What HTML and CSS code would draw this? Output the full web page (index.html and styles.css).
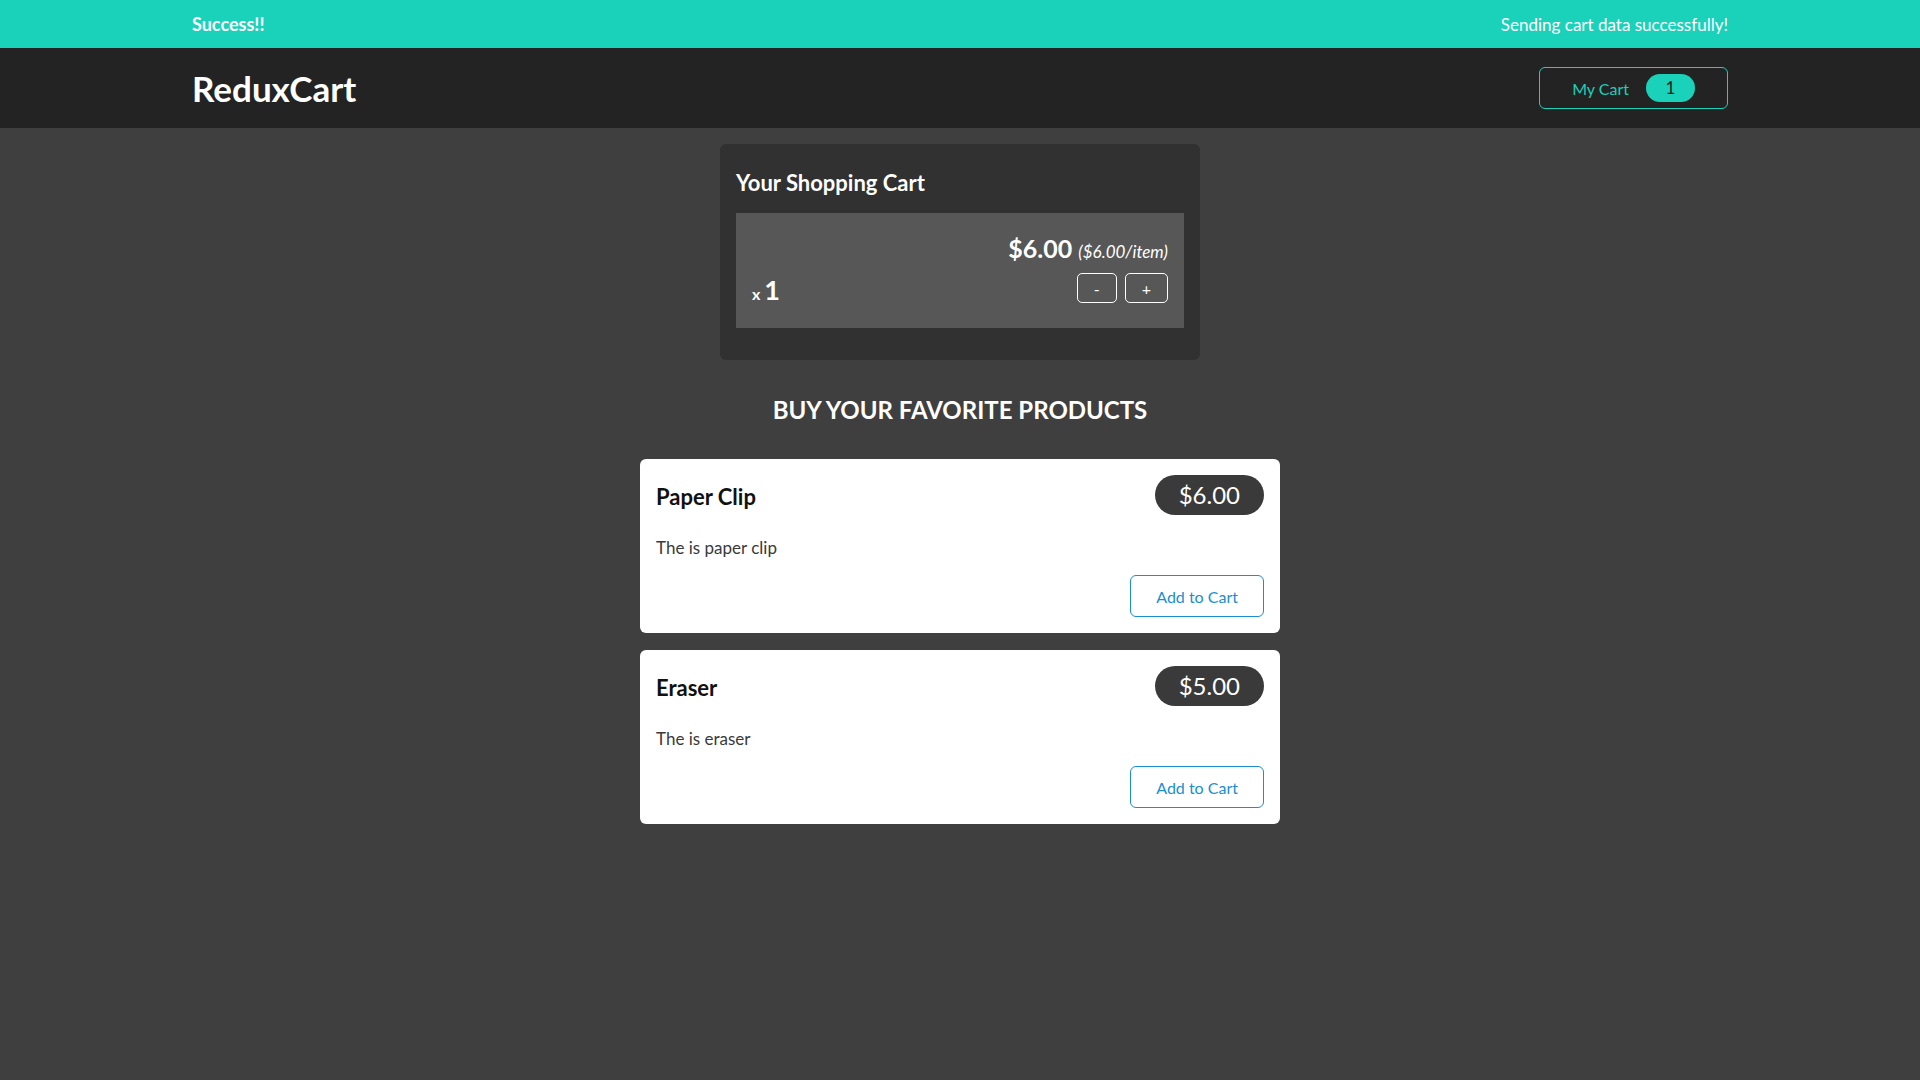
FILE: index.html
```html
<!DOCTYPE html>
<html lang="en">
<head>
<meta charset="utf-8">
<title>ReduxCart</title>
<link rel="stylesheet" href="styles.css">
</head>
<body>
<section class="notification">
  <h2>Success!!</h2>
  <p>Sending cart data successfully!</p>
</section>
<header class="header">
  <h1>ReduxCart</h1>
  <nav>
    <button class="cart-button">
      <span>My Cart</span>
      <span class="badge">1</span>
    </button>
  </nav>
</header>
<main>
  <section class="cart">
    <h2>Your Shopping Cart</h2>
    <ul class="cart-list">
      <li class="cart-item">
        <div class="cart-item-top">
          <div class="cart-price">$6.00 <span class="item-price">($6.00/item)</span></div>
        </div>
        <div class="cart-details">
          <div class="quantity">x <span>1</span></div>
          <div class="cart-actions">
            <button>-</button>
            <button>+</button>
          </div>
        </div>
      </li>
    </ul>
  </section>
  <section class="products">
    <h2>Buy your favorite products</h2>
    <ul class="product-list">
      <li class="product">
        <header class="product-head">
          <h3>Paper Clip</h3>
          <div class="price">$6.00</div>
        </header>
        <p>The is paper clip</p>
        <div class="product-actions">
          <button>Add to Cart</button>
        </div>
      </li>
      <li class="product">
        <header class="product-head">
          <h3>Eraser</h3>
          <div class="price">$5.00</div>
        </header>
        <p>The is eraser</p>
        <div class="product-actions">
          <button>Add to Cart</button>
        </div>
      </li>
    </ul>
  </section>
</main>
</body>
</html>
```

FILE: styles.css
```css
* {
  box-sizing: border-box;
}

html {
  font-family: Lato, "Noto Sans", sans-serif;
}

body {
  margin: 0;
  background-color: #3f3f3f;
}

.notification {
  height: 48px;
  padding: 0 10%;
  display: flex;
  justify-content: space-between;
  align-items: center;
  background-color: #1ad1b9;
  color: #ffffff;
}

.notification h2 {
  margin: 0;
  font-size: 18px;
  font-weight: 700;
}

.notification p {
  margin: 0;
  font-size: 17px;
}

.header {
  height: 80px;
  padding: 0 10%;
  display: flex;
  justify-content: space-between;
  align-items: center;
  background-color: #242323;
}

.header h1 {
  margin: 0;
  color: #ffffff;
  font-size: 35px;
  font-weight: 700;
}

.cart-button {
  display: flex;
  align-items: center;
  height: 42px;
  padding: 0 32px;
  background: transparent;
  border: 1px solid #1ad1b9;
  border-radius: 6px;
  color: #1ad1b9;
  font: inherit;
  font-size: 16px;
  cursor: pointer;
}

.badge {
  margin-left: 17px;
  width: 49px;
  height: 28px;
  line-height: 28px;
  border-radius: 30px;
  background-color: #1ad1b9;
  color: #1d1d1d;
  text-align: center;
  font-size: 17px;
}

.cart {
  width: 480px;
  margin: 16px auto 0;
  padding: 16px 16px 32px;
  background-color: #313131;
  border-radius: 6px;
  color: #ffffff;
}

.cart h2 {
  margin: 8px 0 0;
  font-size: 22px;
  line-height: 29px;
  font-weight: 700;
}

.cart-list {
  list-style: none;
  margin: 0;
  padding: 0;
}

.cart-item {
  margin-top: 16px;
  padding: 16px;
  background-color: #575757;
}

.cart-item-top {
  display: flex;
  justify-content: flex-end;
  padding-top: 3px;
  height: 35px;
  line-height: 32px;
}

.cart-price {
  font-size: 25px;
  font-weight: 700;
}

.item-price {
  font-size: 17px;
  line-height: 1;
  font-weight: 400;
  font-style: italic;
}

.cart-details {
  display: flex;
  justify-content: space-between;
  align-items: center;
  margin: 9px 0;
  height: 30px;
}

.quantity {
  padding-top: 8px;
  font-size: 16px;
  font-weight: 700;
  line-height: 30px;
}

.quantity span {
  font-size: 27px;
  line-height: 1;
}

.cart-actions {
  display: flex;
  gap: 8px;
}

.cart-actions button {
  height: 30px;
  padding: 0 16px;
  background: transparent;
  border: 1px solid #ffffff;
  border-radius: 5px;
  color: #ffffff;
  font: inherit;
  font-size: 16px;
  cursor: pointer;
}

.products h2 {
  margin: 35px 0 34px;
  color: #ffffff;
  text-align: center;
  text-transform: uppercase;
  font-size: 24px;
  line-height: 30px;
  font-weight: 700;
}

.product-list {
  list-style: none;
  width: 640px;
  margin: 0 auto;
  padding: 0;
}

.product {
  margin-bottom: 17px;
  padding: 16px;
  background-color: #ffffff;
  border-radius: 6px;
}

.product-head {
  display: flex;
  justify-content: space-between;
  align-items: center;
  height: 40px;
}

.product-head h3 {
  margin: 2px 0 0;
  font-size: 22px;
  font-weight: 700;
  color: #111111;
}

.price {
  height: 40px;
  line-height: 40px;
  padding: 0 24px;
  border-radius: 30px;
  background-color: #3a3a3a;
  color: #ffffff;
  font-size: 24px;
}

.product p {
  margin: 21px 0 15px;
  line-height: 24px;
  font-size: 17px;
  color: #3a3a3a;
}

.product-actions {
  display: flex;
  justify-content: flex-end;
}

.product-actions button {
  height: 42px;
  padding: 0 25px;
  background: transparent;
  border: 1px solid #1a8ed1;
  border-radius: 6px;
  color: #1a8ed1;
  font: inherit;
  font-size: 16px;
  cursor: pointer;
}
```
